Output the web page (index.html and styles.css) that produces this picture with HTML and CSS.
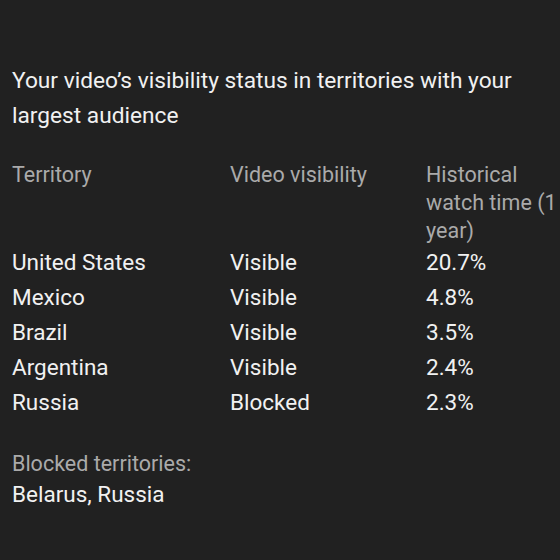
FILE: index.html
```html
<!DOCTYPE html>
<html>
<head>
<meta charset="utf-8">
<link rel="stylesheet" href="styles.css">
</head>
<body>
<div class="page">
  <p class="title">Your video’s visibility status in territories with your largest audience</p>
  <div class="table">
    <div class="th">Territory</div>
    <div class="th">Video visibility</div>
    <div class="th">Historical watch time (1 year)</div>
    <div class="td">United States</div><div class="td">Visible</div><div class="td">20.7%</div>
    <div class="td">Mexico</div><div class="td">Visible</div><div class="td">4.8%</div>
    <div class="td">Brazil</div><div class="td">Visible</div><div class="td">3.5%</div>
    <div class="td">Argentina</div><div class="td">Visible</div><div class="td">2.4%</div>
    <div class="td">Russia</div><div class="td">Blocked</div><div class="td">2.3%</div>
  </div>
  <div class="blocked">
    <div class="label">Blocked territories:</div>
    <div class="value">Belarus, Russia</div>
  </div>
</div>
</body>
</html>
```
FILE: styles.css
```css
html, body {
  margin: 0;
  background: #212121;
  height: 100%;
}
.page {
  font-family: Roboto, "Noto Sans", sans-serif;
  color: #f1f1f1;
  padding: 63px 0 0 12px;
}
.title {
  margin: 0;
  font-size: 22.7px;
  line-height: 35px;
  width: 540px;
}
.table {
  margin-top: 28px;
  display: grid;
  grid-template-columns: 218px 196px 134px;
}
.th {
  font-size: 21.5px;
  line-height: 28px;
  color: #aaaaaa;
}
.td {
  font-size: 22.5px;
  line-height: 35px;
}
.blocked {
  margin-top: 29px;
}
.label {
  font-size: 21.5px;
  line-height: 30px;
  color: #aaaaaa;
}
.value {
  font-size: 22.5px;
  line-height: 30px;
}
```
